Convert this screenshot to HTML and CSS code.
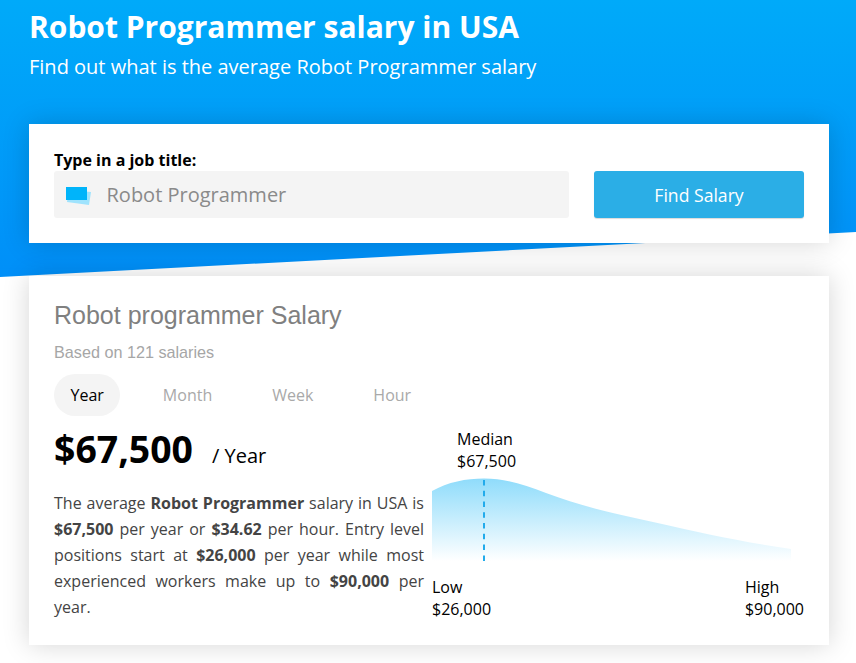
FILE: index.html
```html
<!DOCTYPE html>
<html lang="en">
<head>
  <meta charset="UTF-8">
  <title>Robot Programmer salary in USA</title>
  <link rel="stylesheet" href="styles.css">
</head>
<body>
  <div class="hero-bg"></div>
  <div class="page">
    <header class="hero">
      <h1>Robot Programmer salary in USA</h1>
      <p>Find out what is the average Robot Programmer salary</p>
    </header>

    <form class="card search">
      <label class="search-label" for="job">Type in a job title:</label>
      <div class="search-row">
        <div class="search-input">
          <svg class="search-icon" width="26" height="20" viewBox="0 0 26 20">
            <polygon points="3,5 25,7 23,20 1,17" fill="#9fe3fd"/>
            <rect x="0" y="0" width="21" height="13" fill="#00b4fa" transform="translate(0,2)"/>
          </svg>
          <input id="job" type="text" value="Robot Programmer">
        </div>
        <button class="search-btn" type="button">Find Salary</button>
      </div>
    </form>

    <section class="card result">
      <h2>Robot programmer Salary</h2>
      <div class="based">Based on 121 salaries</div>
      <div class="tabs">
        <span class="tab active">Year</span>
        <span class="tab">Month</span>
        <span class="tab">Week</span>
        <span class="tab">Hour</span>
      </div>
      <div class="result-body">
        <div class="summary">
          <div class="amount"><strong>$67,500</strong><span>/ Year</span></div>
          <p>The average <b>Robot Programmer</b> salary in USA is <b>$67,500</b> per year or <b>$34.62</b> per hour. Entry level positions start at <b>$26,000</b> per year while most experienced workers make up to <b>$90,000</b> per year.</p>
        </div>
        <div class="chart">
          <div class="median">Median<br>$67,500</div>
          <svg class="curve" width="372" height="83" viewBox="0 0 372 83">
            <defs>
              <linearGradient id="fade" x1="0" y1="0" x2="0" y2="1">
                <stop offset="0" stop-color="#8fdcfb"/>
                <stop offset="1" stop-color="#ffffff"/>
              </linearGradient>
            </defs>
            <path d="M0 13 C16 4 34 0.500 52 0.500 C74 0.500 92 7 114 15 C130 21 146 26 161 30 C178 35 200 39 221 44 C270 55 310 64 359 71 L359 83 L0 83 Z" fill="url(#fade)"/>
            <line x1="52" y1="2" x2="52" y2="83" stroke="#22abeb" stroke-width="2" stroke-dasharray="5.500 5.270"/>
          </svg>
          <div class="range">
            <div>Low<br>$26,000</div>
            <div>High<br>$90,000</div>
          </div>
        </div>
      </div>
    </section>
  </div>
</body>
</html>
```

FILE: styles.css
```css
body {
  margin: 0;
  font-family: "Open Sans", sans-serif;
  background: white;
  color: black;
}
/* slanted blue band behind the top of the page */
.hero-bg {
  position: absolute;
  top: 0;
  left: 0;
  width: 100%;
  height: 277px;
  background: linear-gradient(#00aaf9, #008ff8);
  clip-path: polygon(0 0, 100% 0, 100% 232px, 0 277px);
}
.page {
  position: relative;
  width: 800px;
  margin: 0 auto 0 29px;
  padding-bottom: 18px;
}
.hero {
  color: white;
  height: 124px;
}
.hero h1 {
  margin: 0;
  padding-top: 8px;
  font-size: 30px;
  line-height: 38px;
  font-weight: 700;
}
.hero p {
  margin: 0;
  padding-top: 7px;
  font-size: 20px;
  line-height: 27px;
}
.card {
  background: white;
  box-shadow: 0 0 25px rgba(0,0,0,0.17);
  box-sizing: border-box;
}
.search {
  height: 119px;
  padding: 26px 25px 0;
}
.search-label {
  display: block;
  font-size: 16px;
  font-weight: 700;
  line-height: 21px;
}
.search-row {
  display: flex;
  justify-content: space-between;
}
.search-input {
  width: 515px;
  height: 47px;
  background: #f4f4f4;
  border-radius: 3px;
  display: flex;
  align-items: center;
  padding-left: 12px;
  box-sizing: border-box;
}
.search-icon {
  flex: none;
}
.search-input input {
  flex: 1;
  min-width: 0;
  margin-left: 14.5px;
  border: none;
  background: transparent;
  font-family: "Open Sans", sans-serif;
  font-size: 20px;
  color: #8a8a8a;
  padding: 0;
  outline: none;
}
.search-btn {
  width: 210px;
  height: 47px;
  background: #2baee6;
  color: white;
  border: none;
  border-radius: 3px;
  box-shadow: 0 1px 1px rgba(0,0,0,0.15);
  font-family: "Open Sans", sans-serif;
  font-size: 17.6px;
  padding: 0;
  cursor: pointer;
}
.result {
  margin-top: 33px;
  height: 369px;
  padding: 24px 25px 0;
}
.result h2 {
  margin: 0;
  font-family: "Liberation Sans", Arial, sans-serif;
  font-size: 25px;
  line-height: 30px;
  font-weight: 400;
  color: #808080;
}
.based {
  margin-top: 12px;
  font-family: "Liberation Sans", Arial, sans-serif;
  font-size: 16.2px;
  line-height: 20px;
  color: #a6a6a6;
}
.tabs {
  display: flex;
  margin-top: 12px;
}
.tab {
  padding: 0 16.5px;
  margin-right: 27px;
  height: 42px;
  line-height: 42px;
  border-radius: 21px;
  font-size: 16px;
  color: #a9a9a9;
}
.tab.active {
  margin-right: 26px;
  background: #f4f4f4;
  color: black;
}
.result-body {
  display: flex;
}
.summary {
  width: 370px;
  flex: none;
}
.amount {
  margin-top: 8px;
  line-height: 50px;
  height: 50px;
}
.amount strong {
  font-size: 37.4px;
}
.amount span {
  font-size: 20px;
  margin-left: 19px;
}
.summary p {
  margin: 16px 0 0;
  font-size: 16px;
  line-height: 26px;
  color: #444;
  text-align: justify;
}
.chart {
  margin-left: 8px;
  flex: 1;
  font-size: 16px;
  line-height: 22px;
}
.median {
  margin-left: 25px;
  padding-top: 12px;
}
.curve {
  display: block;
  margin-top: 6px;
}
.range {
  display: flex;
  justify-content: space-between;
  margin-top: 15px;
}
```
